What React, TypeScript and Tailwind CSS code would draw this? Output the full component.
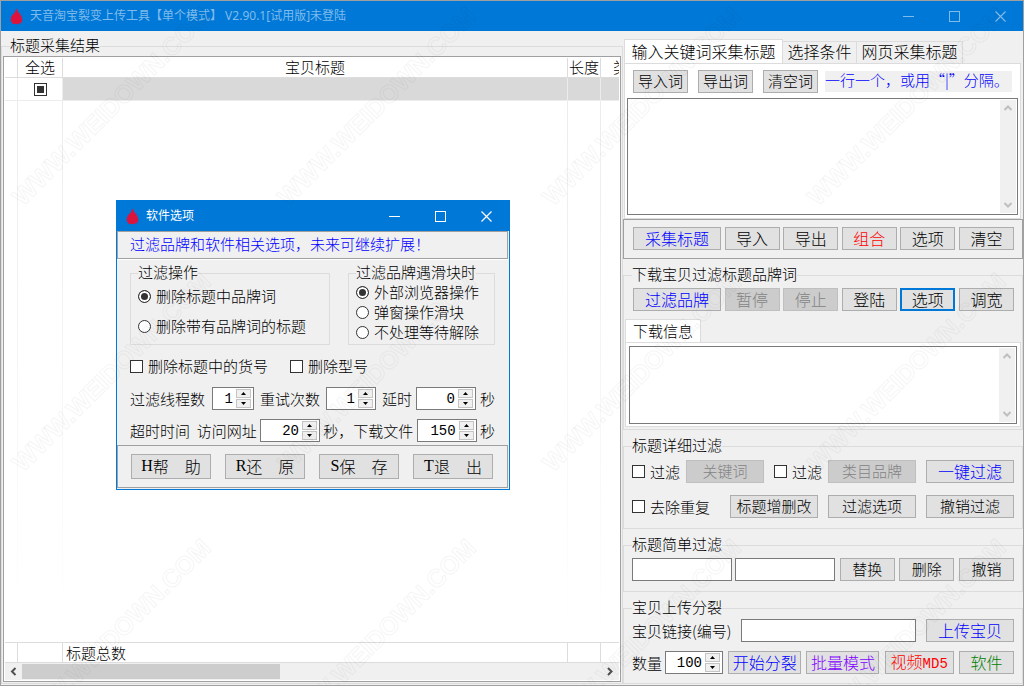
import { useId, type ReactNode } from 'react';
import clsx from 'clsx';

const FONT = 'font-["Noto_Sans_CJK_SC",sans-serif] font-light';

function Flame() {
  return (
    <svg width="13" height="17" viewBox="0 0 13 17" className="shrink-0" aria-hidden="true">
      <path
        d="M6.6 .5 L7.600 2.500 L7.800 4.500 L9 3.800 L9 5.800 L10.600 5.600 L10.400 7.600 L11.800 8 L11.400 9.800 L12.600 11 L11.800 12.400 L12.400 13.600 L10.800 14.600 L10.600 15.800 L8.500 15.600 L7 16.400 L5 15.800 L2.600 16 L2.200 14.600 L.6 13.600 L1.200 12.200 L.4 11 L1.400 9.800 L1 8.200 L2.300 7.800 L2.200 6 L3.600 6.400 L4 4.600 L5.200 4.800 L5.400 2.400 Z"
        fill="#dc143c"
      />
    </svg>
  );
}

function TitleBar({ title, dim }: { title: ReactNode; dim?: boolean }) {
  const btn = 'flex h-full w-[46px] items-center justify-center';
  return (
    <header
      className={clsx(
        'flex h-[30px] shrink-0 items-center bg-[#0078d7] pl-[9px] text-xs',
        dim ? 'text-[#7fbbeb]' : 'text-white',
      )}
    >
      <Flame />
      <h1 className="ml-[7px] font-normal whitespace-pre font-['Noto_Sans','Noto_Sans_CJK_SC',sans-serif]">{title}</h1>
      <div className="ml-auto flex h-full">
        <button className={btn} aria-label="最小化">
          <svg width="11" height="11" fill="none" stroke="currentColor"><path d="M0 5.5h11" /></svg>
        </button>
        <button className={btn} aria-label="最大化">
          <svg width="11" height="11" fill="none" stroke="currentColor"><rect x=".5" y=".5" width="10" height="10" /></svg>
        </button>
        <button className={btn} aria-label="关闭">
          <svg width="11" height="11" fill="none" stroke="currentColor" strokeWidth="1.2"><path d="M.5 .5l10 10M10.5 .5l-10 10" /></svg>
        </button>
      </div>
    </header>
  );
}

function Btn({ children, className, disabled }: { children: ReactNode; className?: string; disabled?: boolean }) {
  return (
    <button
      disabled={disabled}
      className={clsx(
        'flex shrink-0 items-center justify-center border pb-[2px] whitespace-pre',
        disabled ? 'border-[#bfbfbf] bg-[#cccccc] text-[#838383]' : 'border-[#adadad] bg-[#e1e1e1]',
        className,
        !className?.includes('h-[') && 'h-[23px]',
      )}
    >
      {children}
    </button>
  );
}

function Group({ title, className, children }: { title: string; className?: string; children: ReactNode }) {
  return (
    <fieldset className={clsx('min-w-0 border border-[#dcdcdc]', className)}>
      <legend className="h-5 leading-[18px]">{title}</legend>
      {children}
    </fieldset>
  );
}

function Check({ label, className }: { label: string; className?: string }) {
  return (
    <label className={clsx('flex shrink-0 items-center gap-[5px] whitespace-nowrap', className)}>
      <input type="checkbox" className="size-[13px] appearance-none border border-[#333] bg-white" />
      {label}
    </label>
  );
}

function Radio({ label, name, on }: { label: string; name: string; on?: boolean }) {
  return (
    <label className="flex items-center gap-[5px] whitespace-nowrap">
      <input
        type="radio"
        name={name}
        defaultChecked={on}
        className="size-[13px] appearance-none rounded-full border border-[#333] bg-white checked:bg-[#333] checked:shadow-[inset_0_0_0_2px_#fff]"
      />
      {label}
    </label>
  );
}

function Spin({ label, value, className }: { label: string; value: number; className: string }) {
  const id = useId();
  const step = 'flex h-[9px] w-[15px] items-center justify-center border border-[#c4c4c4] bg-[#f0f0f0]';
  return (
    <>
      <label htmlFor={id} className="whitespace-pre">{label}</label>
      <span className={clsx('flex h-[23px] shrink-0 border border-[#7a7a7a] bg-white', className)}>
        <input
          id={id}
          inputMode="numeric"
          defaultValue={value}
          className="w-0 min-w-0 flex-1 pr-[3px] text-right font-['Liberation_Mono',monospace] text-[14px] outline-none"
        />
        <span className="flex flex-col justify-center gap-px pr-[2px]">
          <button className={step} aria-label="增加">
            <svg width="5" height="3"><path d="M2.5 0L5 3H0z" /></svg>
          </button>
          <button className={step} aria-label="减少">
            <svg width="5" height="3"><path d="M0 0h5L2.5 3z" /></svg>
          </button>
        </span>
      </span>
    </>
  );
}

function Memo({ label, className }: { label: string; className: string }) {
  return (
    <div className={clsx('flex border border-[#7a7a7a] bg-white p-px', className)}>
      <textarea aria-label={label} className="min-w-0 flex-1 resize-none outline-none" />
      <div className="flex w-4 flex-col items-center justify-between bg-[#f0f0f0] py-[5px]">
        <svg width="8" height="6" fill="none" stroke="#bfbfbf" strokeWidth="2"><path d="M.5 5L4 1.5 7.5 5" /></svg>
        <svg width="8" height="6" fill="none" stroke="#bfbfbf" strokeWidth="2"><path d="M.5 1L4 4.5 7.5 1" /></svg>
      </div>
    </div>
  );
}

function TitleGrid() {
  const line = 'border-r border-[#dcdcdc]';
  const fade = 'border-r [border-image:linear-gradient(#ececec,#fff)_1]';
  return (
    <fieldset className="mt-[5px] mb-px flex min-w-0 flex-1 flex-col border border-[#dcdcdc] px-px pb-px">
      <legend className="ml-[7px] h-5 leading-[18px]">标题采集结果</legend>
      <div className="flex min-h-0 flex-1 flex-col border border-[#a0a0a0] bg-white p-px">
        <table className="w-full flex-1 table-fixed border-separate border-spacing-0">
          <colgroup>
            <col className="w-[13px]" />
            <col className="w-[45px]" />
            <col />
            <col className="w-[33px]" />
            <col className="w-[18px]" />
          </colgroup>
          <thead>
            <tr className="h-5 leading-[17px] *:border-b *:border-[#dcdcdc] *:p-0 *:pb-[2px] *:font-light">
              <th className={line} />
              <th className={line}>全选</th>
              <th className={line}>宝贝标题</th>
              <th className={line}>长度</th>
              <th className="overflow-hidden text-left whitespace-nowrap"><span className="ml-3">类</span></th>
            </tr>
          </thead>
          <tbody>
            <tr className="h-[23px] *:border-b *:border-[#ececec] *:p-0">
              <td className="border-r" />
              <td className="border-r">
                <input
                  type="checkbox"
                  aria-label="选择第一行"
                  defaultChecked
                  className="mx-auto block size-[13px] appearance-none border border-[#333] bg-[#333] shadow-[inset_0_0_0_2px_#fff]"
                />
              </td>
              <td className="border-r bg-[#d9d9d9]" />
              <td className="border-r bg-[#d9d9d9]" />
              <td className="bg-[#d9d9d9]" />
            </tr>
            <tr>
              <td className={fade} />
              <td className={fade} />
              <td className={fade} />
              <td className={fade} />
              <td />
            </tr>
          </tbody>
          <tfoot>
            <tr className="h-[21px] leading-[19px] *:border-y *:border-[#dcdcdc] *:p-0">
              <td className={line} />
              <td className={line} />
              <td className={line}><span className="ml-[3px]">标题总数</span></td>
              <td className={line} />
              <td />
            </tr>
          </tfoot>
        </table>
        <div className="flex h-[17px] shrink-0 items-center bg-[#f0f0f0]">
          <svg width="17" height="9" fill="none" stroke="#505050" strokeWidth="2"><path d="M10.5 1L7 4.5 10.5 8" /></svg>
          <div className="h-[15px] w-[42%] bg-[#cdcdcd]" />
          <svg width="17" height="9" fill="none" stroke="#505050" strokeWidth="2" className="ml-auto"><path d="M6 1l3.500 3.500L6 8" /></svg>
        </div>
      </div>
    </fieldset>
  );
}

function SidePanel() {
  return (
    <aside className="flex w-[400px] shrink-0 flex-col pt-2">
      <div role="tablist" className="ml-px flex h-6 items-end text-base leading-[22px]">
        <button role="tab" aria-selected="true" className="h-6 w-[159px] border border-b-0 border-[#dcdcdc] bg-white pb-[2px]">输入关键词采集标题</button>
        <button role="tab" className="h-[22px] w-[74px] border-t border-r border-[#dcdcdc] pb-[2px] leading-[19px]">选择条件</button>
        <button role="tab" className="h-[22px] w-[106px] border-t border-r border-[#dcdcdc] pb-[2px] leading-[19px]">网页采集标题</button>
      </div>
      <div className="mr-[2px] ml-px border border-[#dcdcdc] bg-white px-[2px] pt-[6px] pb-[3px]">
        <div className="mb-[5px] flex items-center gap-[7px] pl-1.5">
          <div className="flex gap-[10px]">
            <Btn className="w-[55px]">导入词</Btn>
            <Btn className="w-[55px]">导出词</Btn>
            <Btn className="w-[55px]">清空词</Btn>
          </div>
          <span className="h-[21px] bg-[#f0f0f0] pr-[3px] leading-[17px] whitespace-nowrap text-[#0000ff]">一行一个，或用“|”分隔。</span>
        </div>
        <Memo label="关键词" className="h-[117px]" />
      </div>

      <div className="flex justify-between border border-[#a0a0a0] pt-[7px] pr-2 pb-2 pl-[9px] text-base">
        <Btn className="w-22 text-[#0000ff]">采集标题</Btn>
        <Btn className="w-[55px]">导入</Btn>
        <Btn className="w-[55px]">导出</Btn>
        <Btn className="w-[55px] text-[#ff0000]">组合</Btn>
        <Btn className="w-[55px]">选项</Btn>
        <Btn className="w-[55px]">清空</Btn>
      </div>

      <Group title="下载宝贝过滤标题品牌词" className="mt-1.5 pb-[2px] *:first:ml-2">
        <div className="flex justify-between pt-[3px] pr-2 pl-[9px] text-base">
          <Btn className="w-22 text-[#0000ff]">过滤品牌</Btn>
          <Btn className="w-[55px]" disabled>暂停</Btn>
          <Btn className="w-[55px]" disabled>停止</Btn>
          <Btn className="w-[55px]">登陆</Btn>
          <Btn className="w-[55px] border-2 !border-[#0078d7]">选项</Btn>
          <Btn className="w-[55px]">调宽</Btn>
        </div>
        <div className="mt-2 ml-px flex">
          <button role="tab" aria-selected="true" className="h-[23px] w-[76px] border border-b-0 border-[#dcdcdc] bg-white pb-[2px]">下载信息</button>
        </div>
        <div className="mx-px border border-[#dcdcdc] bg-white px-[3px] pt-[3px] pb-[2px]">
          <Memo label="下载信息" className="h-[78px]" />
        </div>
      </Group>

      <Group title="标题详细过滤" className="mt-1.5 px-2 pb-[10px]">
        <div className="flex justify-between pt-1">
          <div className="flex gap-1.5">
            <Check label="过滤" />
            <Btn className="w-[78px]" disabled>关键词</Btn>
          </div>
          <div className="flex gap-1.5">
            <Check label="过滤" />
            <Btn className="w-22" disabled>类目品牌</Btn>
          </div>
          <Btn className="w-22 text-base text-[#0000ff]">一键过滤</Btn>
        </div>
        <div className="mt-3 flex gap-[10px]">
          <Check label="去除重复" className="mr-auto" />
          <Btn className="w-22">标题增删改</Btn>
          <Btn className="w-22">过滤选项</Btn>
          <Btn className="w-22">撤销过滤</Btn>
        </div>
      </Group>

      <Group title="标题简单过滤" className="mt-1.5 px-2 pb-[10px]">
        <div className="flex justify-between pt-[3px]">
          <div className="flex gap-[3px]">
            <input aria-label="查找" className="h-[23px] w-[100px] border border-[#7a7a7a] bg-white px-1" />
            <input aria-label="替换为" className="h-[23px] w-[100px] border border-[#7a7a7a] bg-white px-1" />
          </div>
          <Btn className="w-[55px]">替换</Btn>
          <Btn className="w-[55px]">删除</Btn>
          <Btn className="w-[55px]">撤销</Btn>
        </div>
      </Group>

      <Group title="宝贝上传分裂" className="mt-1.5 px-2 pb-[9px]">
        <div className="flex items-center justify-between pt-px">
          <label htmlFor="item-link" className="whitespace-nowrap">宝贝链接(编号)</label>
          <input id="item-link" className="h-[23px] w-[175px] border border-[#7a7a7a] bg-white px-1" />
          <Btn className="w-22 text-base text-[#0000ff]">上传宝贝</Btn>
        </div>
        <div className="mt-[9px] flex items-center justify-between">
          <div className="flex items-center gap-[3px]">
            <Spin label="数量" value={100} className="w-[58px]" />
          </div>
          <Btn className="w-[73px] text-base text-[#0000ff]">开始分裂</Btn>
          <Btn className="w-[73px] text-base text-[#8000ff]">批量模式</Btn>
          <Btn className="w-[69px] text-base text-[#ff0000]">
            <span>视频<span className="font-['Liberation_Mono',monospace] text-[14px]">MD5</span></span>
          </Btn>
          <Btn className="w-[55px] text-base text-[#008000]">软件</Btn>
        </div>
      </Group>
    </aside>
  );
}

function OptionsDialog() {
  const keys = [['H', '帮　助'], ['R', '还　原'], ['S', '保　存'], ['T', '退　出']];
  return (
    <div role="dialog" aria-label="软件选项" className="absolute top-[199px] left-[115px] w-[394px] border border-[#0078d7] bg-[#f0f0f0]">
      <TitleBar title="软件选项" />
      <p className="mr-px border border-[#a0a0a0] pb-[2px] pl-3 leading-6 text-[#0000ff] shadow-[0_1px_0_#fff]">
        过滤品牌和软件相关选项，未来可继续扩展！
      </p>
      <div className="pr-[14px] pl-[13px]">
        <div className="flex items-start justify-between pt-1">
          <Group title="过滤操作" className="h-[82px] w-[200px] px-[7px]">
            <div className="flex flex-col gap-[8px] pt-[2px]">
              <Radio name="filter" label="删除标题中品牌词" on />
              <Radio name="filter" label="删除带有品牌词的标题" />
            </div>
          </Group>
          <Group title="过滤品牌遇滑块时" className="h-[82px] w-[147px] px-[7px]">
            <div className="-mt-px flex flex-col leading-5">
              <Radio name="slider" label="外部浏览器操作" on />
              <Radio name="slider" label="弹窗操作滑块" />
              <Radio name="slider" label="不处理等待解除" />
            </div>
          </Group>
        </div>
        <div className="mt-[10px] flex gap-[22px]">
          <Check label="删除标题中的货号" />
          <Check label="删除型号" />
        </div>
        <div className="mt-[10px] flex justify-between">
          <div className="flex items-center gap-[7px]">
            <Spin label="过滤线程数" value={1} className="w-[42px]" />
          </div>
          <div className="flex items-center gap-1.5">
            <Spin label="重试次数" value={1} className="w-[50px]" />
          </div>
          <div className="flex items-center gap-1">
            <Spin label="延时" value={0} className="w-[60px]" />
            <span>秒</span>
          </div>
        </div>
        <div className="mt-[9px] flex items-center justify-between">
          <Spin label="超时时间  访问网址" value={20} className="w-[60px]" />
          <Spin label="秒，下载文件" value={150} className="w-[60px]" />
          <span>秒</span>
        </div>
      </div>
      <div className="mt-[3px] mr-px mb-px flex justify-between border border-[#a0a0a0] py-2 pr-[14px] pl-[13px] text-base">
        {keys.map(([key, text]) => (
          <Btn key={key} className="h-[25px] w-20">
            <span className="font-['Liberation_Serif',serif]">{key}</span>{text}
          </Btn>
        ))}
      </div>
    </div>
  );
}

function Watermark() {
  return (
    <svg className="pointer-events-none absolute inset-0 h-full w-full" aria-hidden="true">
      <defs>
        <pattern id="mark" x="-12" y="-22" width="265" height="266" patternUnits="userSpaceOnUse">
          <text
            transform="translate(34 228) rotate(-45)"
            fontFamily="Liberation Sans"
            fontSize="25"
            fontWeight="bold"
            fill="none"
            stroke="#000"
            strokeOpacity="0.04"
          >
            WWW.WEIDOWN.COM
          </text>
        </pattern>
      </defs>
      <rect width="100%" height="100%" fill="url(#mark)" />
    </svg>
  );
}

export default function App() {
  return (
    <div className={clsx('relative flex min-h-screen flex-col border border-[#a0a0a0] bg-[#f0f0f0] text-[15px] leading-[22px] text-black', FONT)}>
      <TitleBar dim title="天音淘宝裂变上传工具【单个模式】 V2.90.1[试用版]未登陆" />
      <main className="flex flex-1">
        <TitleGrid />
        <SidePanel />
      </main>
      <OptionsDialog />
      <Watermark />
    </div>
  );
}
